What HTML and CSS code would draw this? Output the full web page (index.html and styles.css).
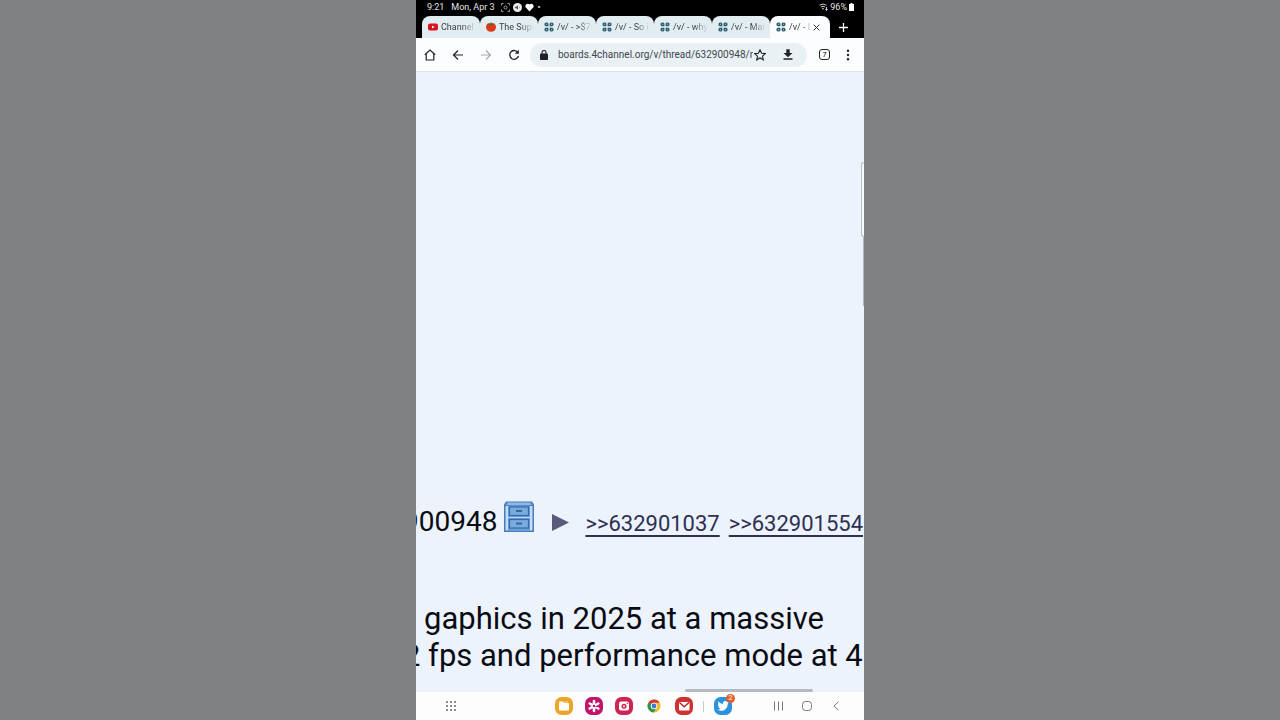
FILE: index.html
```html
<!DOCTYPE html>
<html lang="en">
<head>
    <meta charset="UTF-8">
    <meta name="viewport" content="width=device-width, initial-scale=1.0">
    <title>/v/ - Thread</title>
    <link rel="stylesheet" href="styles.css">
</head>
<body>
    <!-- shared favicon -->
    <svg class="defs" aria-hidden="true">
        <symbol id="clover" viewBox="0 0 10 10">
            <g fill="#2a5c6e">
                <path d="M1.800.4h1.600l1 1v2.800H1.600L.5 3.200V1.600z"/>
                <path d="M8.200.4H6.600l-1 1v2.800h2.800l1.100-1V1.600z"/>
                <path d="M1.800 9.600h1.600l1-1V5.800H1.600L.5 6.800v1.600z"/>
                <path d="M8.200 9.600H6.600l-1-1V5.800h2.800l1.100 1v1.600z"/>
            </g>
            <g fill="#8fb3bd">
                <circle cx="2.500" cy="2.300" r=".7"/>
                <circle cx="7.500" cy="2.300" r=".7"/>
                <circle cx="2.500" cy="7.700" r=".7"/>
                <circle cx="7.500" cy="7.700" r=".7"/>
            </g>
        </symbol>
    </svg>

    <div class="phone">
        <header class="status">
            <span class="time">9:21</span>
            <span class="date">Mon, Apr 3</span>
            <svg width="9" height="9" viewBox="0 0 9 9" fill="none" stroke="#999"><path d="M.5 2.500v-2h2M6.500.5h2v2M.5 6.500v2h2M6.500 8.500h2v-2"/><circle cx="4.500" cy="4.500" r="1.500"/></svg>
            <svg width="9" height="9" viewBox="0 0 9 9"><circle cx="4.500" cy="4.500" r="4.500" fill="#eee"/><path d="M2 3.800h1.200L5 2.300v4.400L3.200 5.200H2zM6 3.300q1 1.200 0 2.400" fill="#555"/></svg>
            <svg width="9" height="9" viewBox="0 0 9 9"><path d="M4.500 8.600L.8 4.600C-.8 2.400 2.200-.8 4.500 1.600 6.800-.8 9.800 2.400 8.200 4.600z" fill="#fff"/></svg>
            <span class="dot">•</span>
            <span class="battery">
                <svg width="9" height="8" viewBox="0 0 9 8" fill="none" stroke="#ccc"><path d="M.5 2.200q3.500-2.400 7 0M1.800 4q2.200-1.500 4.400 0M3 5.700h2M7.500 4v3.500M6.300 6.300l1.200 1.200 1.200-1.200"/></svg>
                96%
                <svg width="5" height="8" viewBox="0 0 5 8"><path d="M1.500 0h2v1H5v7H0V1h1.500z" fill="#fff"/></svg>
            </span>
        </header>

        <nav class="tabs">
            <button class="tab">
                <svg width="10" height="10" viewBox="0 0 10 10"><rect y="1.500" width="10" height="7" rx="2" fill="#d9151b"/><path d="M4 3.400v3.200L6.700 5z" fill="#fff"/></svg>
                <span>Channel</span>
            </button>
            <button class="tab">
                <svg width="10" height="10" viewBox="0 0 10 10"><path d="M5 2C8-.2 10 2.600 10 5c0 3-2 4.800-5 4.800S0 8 0 5c0-2.400 2-5.200 5-3z" fill="#dc3b1d"/><path d="M2 1.500l2 .3L5 0l1 1.600 2.300.2-2 .8-.3 1.200-1.400-.9-1.700.5.3-1.100z" fill="#4b6b2d"/></svg>
                <span>The Supe</span>
            </button>
            <button class="tab"><svg width="10" height="10"><use href="#clover"/></svg><span>/v/ - &gt;$70</span></button>
            <button class="tab"><svg width="10" height="10"><use href="#clover"/></svg><span>/v/ - So i</span></button>
            <button class="tab"><svg width="10" height="10"><use href="#clover"/></svg><span>/v/ - why</span></button>
            <button class="tab"><svg width="10" height="10"><use href="#clover"/></svg><span>/v/ - Mar</span></button>
            <div class="tab-active">
                <button class="tab active"><svg width="10" height="10"><use href="#clover"/></svg><span>/v/ - I</span></button>
                <button class="close" aria-label="Close tab"><svg width="7" height="7" viewBox="0 0 7 7" stroke="#333"><path d="M.7.7l5.600 5.600M6.300.7L.7 6.300"/></svg></button>
            </div>
            <button class="new-tab" aria-label="New tab"><svg width="9" height="9" viewBox="0 0 9 9" stroke="#fff" stroke-width="1.300"><path d="M4.500 0v9M0 4.500h9"/></svg></button>
        </nav>

        <div class="toolbar">
            <button aria-label="Home"><svg width="12" height="12" viewBox="0 0 12 12" fill="none" stroke="#222" stroke-width="1.200"><path d="M.8 5.700L6 1l5.200 4.700M2.200 4.800V11h7.600V4.800"/></svg></button>
            <button aria-label="Back"><svg width="12" height="12" viewBox="0 0 12 12" fill="none" stroke="#222" stroke-width="1.200"><path d="M11 6H1.600M6 1.500L1.500 6 6 10.500"/></svg></button>
            <button aria-label="Forward" disabled><svg width="12" height="12" viewBox="0 0 12 12" fill="none" stroke="#aaa" stroke-width="1.200"><path d="M1 6h9.400M6 1.500l4.500 4.500L6 10.500"/></svg></button>
            <button aria-label="Reload"><svg width="12" height="12" viewBox="0 0 12 12" fill="none" stroke="#222" stroke-width="1.300"><path d="M10 3.800A4.400 4.400 0 1 0 10.400 7"/><path d="M10.800.8v4H6.800z" fill="#222" stroke="none"/></svg></button>
            <div class="omnibox">
                <svg width="8" height="10" viewBox="0 0 8 10"><rect y="3.500" width="8" height="6.500" rx="1" fill="#222"/><path d="M2 4V2.500a2 2 0 0 1 4 0V4" fill="none" stroke="#222" stroke-width="1.100"/></svg>
                <input type="text" aria-label="Address" value="boards.4channel.org/v/thread/632900948/r">
                <button aria-label="Bookmark"><svg width="12" height="12" viewBox="0 0 12 12" fill="none" stroke="#222" stroke-width="1.100"><path d="M6 .8l1.600 3.400 3.700.4-2.800 2.500.8 3.700L6 8.900l-3.300 1.900.8-3.700L.7 4.600l3.700-.4z"/></svg></button>
                <button aria-label="Download"><svg width="10" height="11" viewBox="0 0 10 11" fill="#222"><path d="M3.300.3h3.400V4h2.800L5 8.300.5 4h2.800zM.5 9.200h9v1.500h-9z"/></svg></button>
            </div>
            <button class="count" aria-label="Open tabs"><span>7</span></button>
            <button aria-label="Menu"><svg width="4" height="12" viewBox="0 0 4 12" fill="#222"><circle cx="2" cy="1.800" r="1.200"/><circle cx="2" cy="6" r="1.200"/><circle cx="2" cy="10.200" r="1.200"/></svg></button>
        </div>

        <main class="page">
            <article class="post">
                <div class="post-info">
                    <span class="post-no">900948</span>
                    <svg class="cabinet" width="30" height="31" viewBox="0 0 30 31">
                        <path d="M2 .5h26l2 3V31H0V3.500z" fill="#4a7ab8"/>
                        <path d="M3.500 1.500h23L28 4H2z" fill="#8db9e6"/>
                        <path d="M1.500 5h27v24.500h-27z" fill="#c0dcf6"/>
                        <path d="M4 4.500h22V30H4z" fill="#6a9fda"/>
                        <rect x="5.500" y="6" width="19" height="8.500" fill="#78acdf" stroke="#3a69aa" stroke-width="1.200"/>
                        <rect x="5.500" y="18.500" width="19" height="8.500" fill="#78acdf" stroke="#3a69aa" stroke-width="1.200"/>
                        <path d="M4 16.500h22" stroke="#b7d7f4"/>
                        <path d="M12 9h6v2h-6zM12 21.500h6v2h-6z" fill="#3f6396"/>
                    </svg>
                    <svg class="arrow" width="17" height="17" viewBox="0 0 17 17"><path d="M0 0l17 8.500L0 17z" fill="#59597c"/></svg>
                    <a class="backlink" href="#p632901037">&gt;&gt;632901037</a>
                    <a class="backlink" href="#p632901554">&gt;&gt;632901554</a>
                </div>
                <p class="message"><span class="indent">gaphics in 2025 at a massive</span><br>2 fps and performance mode at 45</p>
            </article>
            <div class="scroll-thumb"></div>
            <div class="edge-panel"></div>
            <div class="edge-line"></div>
        </main>

        <nav class="dock">
            <button aria-label="All apps"><svg width="10" height="10" viewBox="0 0 10 10" fill="#666"><circle cx="1" cy="1" r="1"/><circle cx="5" cy="1" r="1"/><circle cx="9" cy="1" r="1"/><circle cx="1" cy="5" r="1"/><circle cx="5" cy="5" r="1"/><circle cx="9" cy="5" r="1"/><circle cx="1" cy="9" r="1"/><circle cx="5" cy="9" r="1"/><circle cx="9" cy="9" r="1"/></svg></button>
            <div class="apps">
                <button aria-label="My Files"><svg width="18" height="18" viewBox="0 0 18 18"><rect width="18" height="18" rx="6.500" fill="#eba527"/><path d="M4 5.500q0-1 1-1h3l1.300 1.500H13q1 0 1 1v5.500q0 1-1 1H5q-1 0-1-1z" fill="#fff"/><path d="M9 4.500h4v1H9.800z" fill="#fbe18a"/></svg></button>
                <button aria-label="Gallery"><svg width="18" height="18" viewBox="0 0 18 18"><rect width="18" height="18" rx="6.500" fill="#c0146c"/><path d="M9 4v10M4.700 6.500l8.600 5M4.700 11.500l8.600-5" stroke="#fff" stroke-width="2.600" stroke-linecap="round"/><circle cx="9" cy="9" r="1.300" fill="#c0146c"/></svg></button>
                <button aria-label="Camera"><svg width="18" height="18" viewBox="0 0 18 18"><rect width="18" height="18" rx="6.500" fill="#d02352"/><rect x="4" y="4.500" width="10" height="9" rx="2" fill="#fff"/><circle cx="9" cy="9.200" r="2.500" fill="#d02352"/><circle cx="9" cy="9.200" r="1" fill="#fff"/><circle cx="12.300" cy="6.200" r=".7" fill="#d02352"/></svg></button>
                <button aria-label="Chrome"><svg width="18" height="18" viewBox="0 0 18 18"><circle cx="9" cy="9" r="6.500" fill="#f2bd29"/><path d="M9 9L3.400 5.700A6.500 6.500 0 0 1 14.600 5.700H9z" fill="#d83a2f"/><path d="M9 9l-5.600-3.300A6.500 6.500 0 0 0 8.700 15.500l3-5z" fill="#269650"/><circle cx="9" cy="9" r="3.200" fill="#fff"/><circle cx="9" cy="9" r="2.400" fill="#3c79db"/></svg></button>
                <button aria-label="Mail"><svg width="18" height="18" viewBox="0 0 18 18"><rect width="18" height="18" rx="6.500" fill="#cf3030"/><rect x="4" y="5" width="10.500" height="8.500" rx="1" fill="#fff"/><path d="M4.500 5.500L9.200 9.700l4.700-4.200" fill="none" stroke="#a92626" stroke-width="1.400"/></svg></button>
                <span class="divider"></span>
                <button class="twitter" aria-label="Twitter"><svg width="18" height="18" viewBox="0 0 18 18"><rect width="18" height="18" rx="6.500" fill="#2b93dc"/><path d="M3.500 12.600q2 .1 3.200-.9-1.700-.2-2.200-1.700h1Q3.800 9.300 3.900 7.300l1 .3Q3.400 6.200 4.300 4.500 6.300 6.700 9 6.900C8.600 4.200 11.400 3.200 13 4.900l1.600-.6-1 1.400 1.400-.3-1.300 1.400C13.800 12.600 8.100 15.800 3.500 12.600z" fill="#fff"/></svg><span class="badge">2</span></button>
            </div>
            <div class="keys">
                <button aria-label="Recents"><svg width="10" height="10" viewBox="0 0 10 10" stroke="#777"><path d="M1.500.5v9M5.500.5v9M9.500.5v9"/></svg></button>
                <button aria-label="Home screen"><svg width="10" height="10" viewBox="0 0 10 10" fill="none" stroke="#777"><rect x=".5" y=".5" width="9" height="9" rx="3"/></svg></button>
                <button aria-label="Go back"><svg width="10" height="10" viewBox="0 0 10 10" fill="none" stroke="#777"><path d="M7.500.7L3 5l4.500 4.300"/></svg></button>
            </div>
        </nav>
    </div>
</body>
</html>
```

FILE: styles.css
```css
* {
    box-sizing: border-box;
}
body {
    margin: 0;
    background: #808182;
    font-family: Roboto, "Liberation Sans", sans-serif;
}
button {
    display: flex;
    align-items: center;
    justify-content: center;
    padding: 0;
    border: 0;
    background: none;
    font: inherit;
    color: inherit;
}
svg {
    display: block;
    flex-shrink: 0;
}
.defs {
    position: absolute;
    width: 0;
    height: 0;
}
.phone {
    display: flex;
    flex-direction: column;
    width: 35%;
    min-width: 448px;
    height: 100vh;
    margin: 0 auto;
    overflow: hidden;
    background: #ecf3fd;
}

/* status bar */
.status {
    display: flex;
    align-items: center;
    gap: 3px;
    height: 15px;
    padding: 0 10px 1px 11px;
    background: #000;
    color: #e4e4e4;
    font-size: 9px;
}
.date {
    margin: 0 3px 0 4px;
}
.dot {
    margin-left: 1px;
}
.battery {
    display: flex;
    align-items: center;
    gap: 2px;
    margin-left: auto;
}

/* tab strip */
.tabs {
    display: flex;
    height: 23px;
    padding: 1px 0 0 6px;
    background: #000;
    color: #3c4246;
    font-size: 9px;
}
.tab {
    gap: 3px;
    width: 58px;
    padding: 0 4px 0 6px;
    border-radius: 8px 8px 0 0;
    background: #e1edf1;
}
.tab span {
    flex: 1;
    overflow: hidden;
    white-space: nowrap;
    text-align: left;
    -webkit-mask-image: linear-gradient(90deg, #000 60%, transparent);
    mask-image: linear-gradient(90deg, #000 60%, transparent);
}
.tab-active {
    display: flex;
    width: 60px;
    border-radius: 8px 8px 0 0;
    background: #fbfdfe;
}
.tab.active {
    width: 42px;
    padding-right: 0;
    background: none;
}
.close {
    width: 8px;
}
.new-tab {
    flex: 1;
    padding-right: 7px;
}

/* address bar */
.toolbar {
    display: flex;
    align-items: center;
    gap: 16px;
    height: 34px;
    padding: 0 14px 0 8px;
    border-bottom: 1px solid #dde2ec;
    background: #fbfdfe;
}
.omnibox {
    display: flex;
    flex: 1;
    align-items: center;
    height: 24px;
    margin: 0 -4px 0 -6px;
    padding: 0 14px 0 10px;
    border-radius: 12px;
    background: #e9f1f5;
}
.omnibox input {
    flex: 1;
    min-width: 0;
    margin: 0 1px 0 10px;
    padding: 0;
    border: 0;
    background: none;
    color: #40464b;
    font: 10px Roboto, "Liberation Sans", sans-serif;
}
.omnibox button + button {
    margin-left: 17px;
}
.count {
    width: 11px;
    height: 11px;
    border: 1px solid #222;
    border-radius: 3px;
    font-size: 7px;
}

/* thread */
.page {
    position: relative;
    display: flex;
    flex: 1;
    flex-direction: column;
    justify-content: flex-end;
    overflow: hidden;
}
.post {
    margin-left: -13px;
    padding-bottom: 18px;
    white-space: nowrap;
    color: #0b0b12;
}
.post-info {
    display: flex;
    align-items: baseline;
    margin-bottom: 62px;
}
.post-no {
    font-size: 28px;
}
.cabinet {
    align-self: flex-start;
    margin: -4px 18px 0 7px;
}
.arrow {
    margin-right: 16px;
}
.backlink {
    margin-right: 9px;
    color: #2e3050;
    font-size: 22px;
    text-underline-offset: 4px;
}
.message {
    margin: 0;
    font-size: 31px;
    line-height: 37px;
}
.indent {
    padding-left: 21px;
}
.scroll-thumb {
    position: absolute;
    right: 51px;
    bottom: 0;
    width: 128px;
    height: 3px;
    border-radius: 2px;
    background: #b5b9c0;
}
.edge-panel {
    position: absolute;
    top: 90px;
    right: 0;
    width: 3px;
    height: 75px;
    border: 1px solid #b9c0ca;
    border-right: 0;
    border-radius: 3px 0 0 3px;
    background: #f6f9fe;
}
.edge-line {
    position: absolute;
    top: 165px;
    right: 0;
    width: 1px;
    height: 69px;
    background: #b4b9c1;
}

/* bottom bar */
.dock {
    display: grid;
    grid-template-columns: 1fr auto 1fr;
    align-items: center;
    height: 28px;
    padding: 0 23px 0 30px;
    background: #fdfdfe;
}
.dock > button {
    justify-self: start;
}
.apps {
    display: flex;
    align-items: center;
    gap: 12px;
}
.divider {
    width: 1px;
    height: 11px;
    margin: 0 -2px;
    background: #ccc;
}
.twitter {
    position: relative;
}
.badge {
    position: absolute;
    top: -3px;
    right: -3px;
    width: 9px;
    height: 9px;
    border-radius: 50%;
    background: #e2602c;
    color: #fff;
    font-size: 7px;
    line-height: 9px;
}
.keys {
    display: flex;
    gap: 19px;
    justify-self: end;
}
```
